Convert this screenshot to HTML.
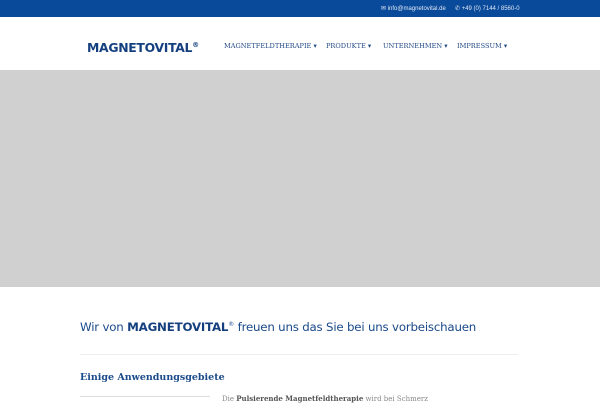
<!DOCTYPE html>
<html><head><style>
*{margin:0;padding:0;box-sizing:border-box}
body{width:600px;height:400px;overflow:hidden;background:#fff;font-family:"DejaVu Serif","Liberation Serif",serif;position:relative}
.top{position:absolute;left:0;top:0;width:600px;height:17px;background:#0a4a9b;color:#dfe8f5;font-family:"Liberation Sans",sans-serif;font-size:6px}
.top span{position:absolute;top:5px}
.nav{position:absolute;top:17px;left:0;width:600px;height:53px;background:#fff}
.logo{position:absolute;left:87px;top:23px;font-family:"DejaVu Sans",sans-serif;font-weight:900;font-size:12.4px;color:#15407f;letter-spacing:-0.3px}
.logo sup{font-size:7px}
.menu{position:absolute;top:25px;font-size:6.6px;color:#234a87;white-space:nowrap}
.hero{position:absolute;top:70px;left:0;width:600px;height:217px;background:#d0d0d0}
h1{position:absolute;left:80px;top:320px;font-family:"DejaVu Sans",sans-serif;font-weight:normal;font-size:11.8px;color:#1a4a8a;white-space:nowrap;letter-spacing:-0.2px}
h1 b{font-weight:900;color:#15407f}
.hr{position:absolute;left:80px;top:354px;width:438px;height:1px;background:#eee}
h2{position:absolute;left:80px;top:372px;font-size:9.5px;font-weight:bold;color:#1a4a8a}
.p{position:absolute;left:222px;top:394px;font-size:7px;color:#888}
.box{position:absolute;left:80px;top:396px;width:130px;height:1px;background:#ddd}
</style></head><body>
<div class="top"><span style="left:381px">✉ info@magnetovital.de</span><span style="left:455px">✆ +49 (0) 7144 / 8560-0</span></div>
<div class="nav">
<div class="logo">MAGNETOVITAL<sup>®</sup></div>
<div class="menu" style="left:224px">MAGNETFELDTHERAPIE ▾</div>
<div class="menu" style="left:326px">PRODUKTE ▾</div>
<div class="menu" style="left:383px">UNTERNEHMEN ▾</div>
<div class="menu" style="left:457px">IMPRESSUM ▾</div>
</div>
<div class="hero"></div>
<h1>Wir von <b>MAGNETOVITAL</b><sup style="font-size:6px">®</sup> freuen uns das Sie bei uns vorbeischauen</h1>
<div class="hr"></div>
<h2>Einige Anwendungsgebiete</h2>
<div class="box"></div>
<div class="p">Die <b style="color:#555">Pulsierende Magnetfeldtherapie</b> wird bei Schmerz</div>
</body></html>
